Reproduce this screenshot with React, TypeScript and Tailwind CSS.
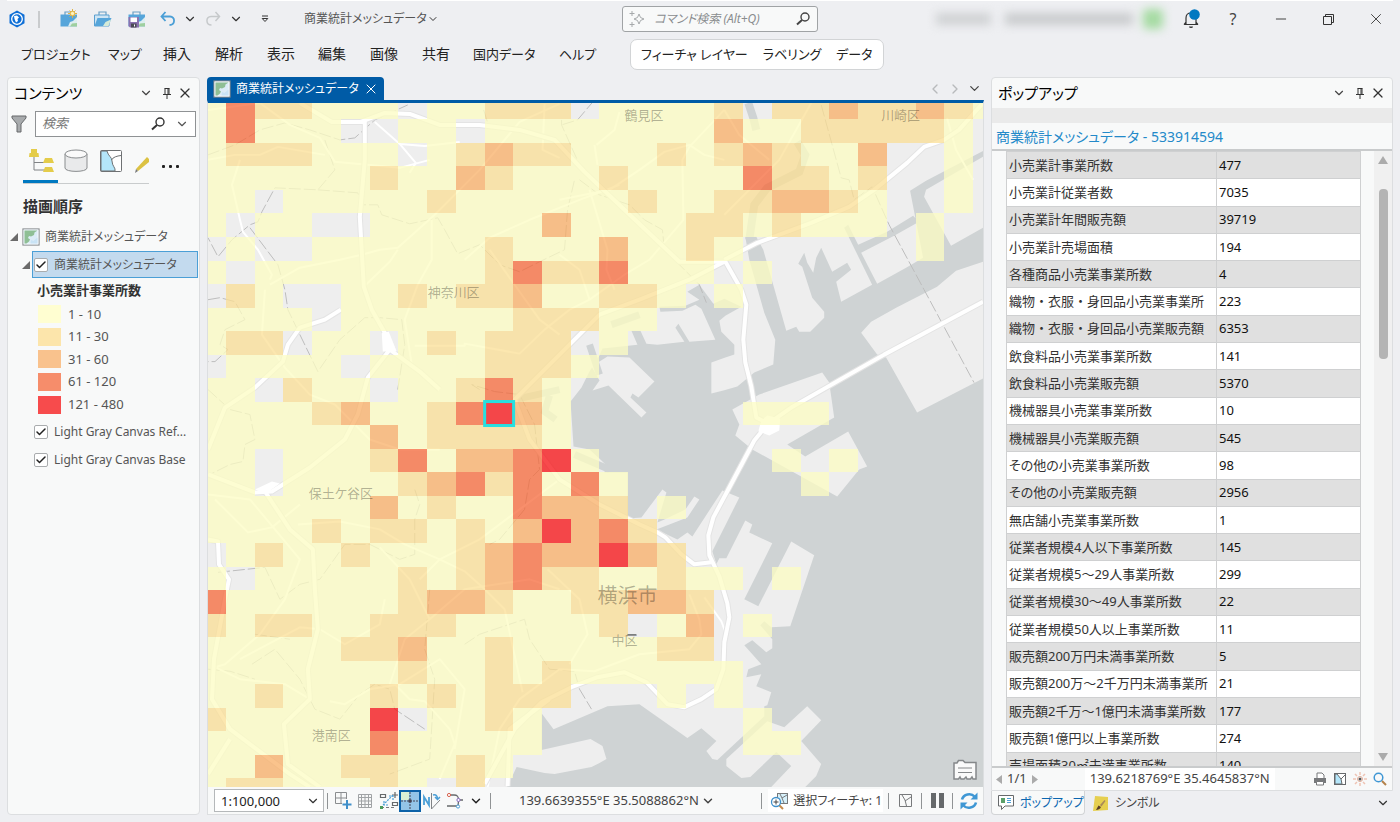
import React from 'react'
import { ChevronDown, ChevronLeft, ChevronRight, X, Check, Minus } from 'lucide-react'
import { clsx } from 'clsx'

const menuItems = [
  { label: 'プロジェクト', width: 'w-[87px] text-[13px]' },
  { label: 'マップ', width: 'w-[55px] text-[13px]' },
  { label: '挿入', width: 'w-[52px]' },
  { label: '解析', width: 'w-[52px]' },
  { label: '表示', width: 'w-[51px]' },
  { label: '編集', width: 'w-[52px]' },
  { label: '画像', width: 'w-[52px]' },
  { label: '共有', width: 'w-[51px]' },
  { label: '国内データ', width: 'w-[86px] text-[13px]' },
  { label: 'ヘルプ', width: 'w-[71px] text-[13px]' },
]

const legend = [
  { label: '1 - 10', color: 'bg-[#fffed1]' },
  { label: '11 - 30', color: 'bg-[#fce5ab]' },
  { label: '31 - 60', color: 'bg-[#f9c28d]' },
  { label: '61 - 120', color: 'bg-[#f68d6b]' },
  { label: '121 - 480', color: 'bg-[#f74b4c]' },
]

const attributes = [
  ['小売業計事業所数', '477'],
  ['小売業計従業者数', '7035'],
  ['小売業計年間販売額', '39719'],
  ['小売業計売場面積', '194'],
  ['各種商品小売業事業所数', '4'],
  ['織物・衣服・身回品小売業事業所', '223'],
  ['織物・衣服・身回品小売業販売額', '6353'],
  ['飲食料品小売業事業所数', '141'],
  ['飲食料品小売業販売額', '5370'],
  ['機械器具小売業事業所数', '10'],
  ['機械器具小売業販売額', '545'],
  ['その他の小売業事業所数', '98'],
  ['その他の小売業販売額', '2956'],
  ['無店舗小売業事業所数', '1'],
  ['従業者規模4人以下事業所数', '145'],
  ['従業者規模5〜29人事業所数', '299'],
  ['従業者規模30〜49人事業所数', '22'],
  ['従業者規模50人以上事業所数', '11'],
  ['販売額200万円未満事業所数', '5'],
  ['販売額200万〜2千万円未満事業所', '21'],
  ['販売額2千万〜1億円未満事業所数', '177'],
  ['販売額1億円以上事業所数', '274'],
  ['売場面積30㎡未満事業所数', '140'],
]

// One character per mesh cell: the class, or "." where there is no data
const mesh = [
  '1422111.11222.11112.22322321',
  '14111..11.11111111311222221.',
  '1222111.1232211121232113..1.',
  '111111211321112111142212..1.',
  '11.111112111111211223321..1.',
  '1.11..111111311112212111.1..',
  '.1..111111211131121......1..',
  '1.1111111124224111.1........',
  '.21..112122311221.1.........',
  '1111.11111122211............',
  '122.11.121222.1.............',
  '.1111.11112221..............',
  '11.211.112421...............',
  '1111231124531......111......',
  '1111113122221...............',
  '11.11124133451......1.1.....',
  '11.111123424141......1......',
  '111111312114332.1...........',
  '1111212212135342............',
  '.1211211123433532...........',
  '1.11111212342211211.1.......',
  '411111123321122332..........',
  '212211222111112.13.1........',
  '111112231121111122..........',
  '1111111211212111111.........',
  '1121112121222...1.1.........',
  '2111115.1121.......1........',
  '111111411111.......11.......',
  '11311221121.................',
  '12211121.2..................',
]

const meshFill: Record<string, string> = {
  '1': '#fdfdc3',
  '2': '#fbdf95',
  '3': '#f9af66',
  '4': '#f6693a',
  '5': '#f60e12',
}

// Mesh origin and cell size in map units
const CELL_W = 28.77
const CELL_H = 23.57
const ORIGIN_X = 197.2
const ORIGIN_Y = 95.8

const places = [
  { name: '鶴見区', x: 625, y: 120, size: 13 },
  { name: '川崎区', x: 882, y: 120, size: 13 },
  { name: '神奈川区', x: 428, y: 297, size: 13 },
  { name: '保土ケ谷区', x: 309, y: 499, size: 13 },
  { name: '港南区', x: 312, y: 741, size: 13 },
  { name: '横浜市', x: 598, y: 604, size: 20 },
  { name: '中区', x: 612, y: 646, size: 13 },
]

const highways = [
  'M984 302L885 355L792 408L769 424L755 441L730 488L714 518L709 536L710 556L720 577L728 604L730 618L725 643L724 670L717 690L702 700L685 708L668 705L647 683L625 673L598 678L572 688L542 703L515 730L485 785',
  'M725 260L742 290L747 305L744 340L746 363L752 387L757 418L769 424',
  'M725 260L758 243L812 223L850 207L875 190L908 163L925 147L945 140L960 130L984 103',
  'M300 103L332 122L365 122L365 160L360 217L364 287L372 310L385 333L390 350L420 372L440 390',
  'M390 350L368 378L358 415L345 440L310 468L272 492L255 493L208 475',
  'M265 492L290 530L313 550L315 590L318 630L308 670L310 700L284 725L288 765L320 788',
  'M208 540L218 542L219 565L229 580L225 600L214 660L212 700L230 730L290 775L310 788',
  'M208 775L230 740',
  'M341 310L325 320L300 328L288 345L283 362L255 388L225 408L208 450',
  'M361 122L385 113L410 114L440 125L480 125L520 130L555 140L585 172L625 210L680 262L725 262',
  'M508 787L510 730L550 700',
  'M725 262L690 280L640 300L600 315L575 340L540 375L515 400L530 440L560 480L600 505L640 525L658 533L666 538L682 555L695 565L712 563',
]

const streets = [
  'M208 160L235 155L260 155L278 147L325 155',
  'M208 110L260 103L290 125L320 138L335 162L400 168L430 160',
  'M240 160L232 185L240 220L243 232L258 250L272 275L270 280',
  'M375 122L400 144L425 146L460 142',
  'M400 144L416 163L410 173',
  'M270 285L300 268L340 260L362 255L380 250L398 248L435 215L480 170L520 122L560 104',
  'M364 287L390 262L398 250M432 220L432 260L418 285L405 320L412 365',
  'M415 346L465 346L465 344L520 354L545 330L570 310L590 300',
  'M265 290L262 335L285 368L310 395L335 405L370 440L400 450L440 450',
  'M560 200L610 190L640 170L665 152L690 145L705 155L725 160',
  'M545 104L543 150L560 158M595 145L598 165M597 145L615 130L620 112',
  'M590 190L608 250L607 270L615 290',
  'M725 110L690 147L683 160L684 220L650 260L625 275L590 300',
  'M465 260L490 238L530 220L580 200L620 185',
  'M490 250L515 285L540 320L560 335',
  'M560 255L580 270L590 300',
  'M725 110L740 135L770 160M812 103L780 160L725 215',
  'M948 118L957 150L974 180',
  'M215 500L248 533L272 528L300 505',
  'M208 495L250 500L300 560L285 600L260 635L225 665L215 668L240 680L285 685L310 700',
  'M330 702L345 705L370 690L400 685L440 660L465 690L455 750',
  'M298 525L340 522L380 530L405 545L440 560L465 572L485 590L505 610L523 693',
  'M380 548L410 580L430 620M385 600L380 625L345 645L320 630L300 628L240 660',
  'M420 580L440 560L480 540L520 510L560 480',
  'M390 685L405 640L430 620L465 590L530 580L560 590',
  'M395 685L410 700L425 702L450 730L455 745L440 780',
  'M488 788L500 730L520 700L560 670L595 672L640 655L690 650L702 635L700 620L690 595',
  'M548 570L580 600L588 635L570 665',
  'M705 598L722 622L728 638',
]

const boundaries = [
  'M208 155L235 145L260 130L285 123L310 130L340 140L355 138L375 120L408 105',
  'M325 140L335 170L318 190L318 190L275 188L262 212L258 222L250 225L232 240L218 257L208 238',
  'M250 228L278 265L285 290L288 310L300 335L318 372L340 340L365 318L380 318L402 320L405 345L398 390',
  'M318 190L358 193L362 205L378 205L382 215L410 224L438 218L445 230L458 254L480 245L500 265L520 272L540 262L565 250L568 210L575 180',
  'M580 180L600 195L630 205L645 220L663 230L665 250L700 285L707 303',
  'M562 120L562 125L580 165M484 110L489 126M595 100L578 120L562 125',
  'M822 105L842 178L850 180L855 200L873 187L890 225L925 290L975 383',
  'M208 300L220 298L235 302L245 320L225 330L220 345L228 350L215 362L208 362',
  'M208 390L230 410L250 415L255 440L245 445L243 462L230 465L210 475',
  'M480 390L472 385L495 392L520 395L535 425L540 470L530 480L525 510L500 540L490 545',
  'M218 573L265 568L280 600L300 585L320 580L345 545L370 545L400 560L415 555L415 520L420 505L415 490',
  'M208 670L230 672L255 680M252 665L275 650L300 680L315 710L340 720L360 695L375 685L390 690L395 710L425 730M255 635L290 640',
  'M465 645L480 635L525 620L530 640L550 670L575 672L580 690L592 710',
  'M430 590L425 650L435 680L430 760L390 775',
]

const MeshMap: React.FC = () => {
  return (
    <svg
      className="block h-full w-full"
      viewBox="208 103 776 685"
      preserveAspectRatio="xMidYMid slice"
      role="img"
      aria-label="商業統計メッシュデータ"
    >
      <rect x="0" y="0" width="1400" height="900" fill="#eeeeee" />

      {/* Tokyo bay with the wharves and canals of Yokohama and Kawasaki */}
      <path
        fill="#cfd3d4"
        d="M571 402L582 388L590 372L600 356L603 349L629 346L638 345L632 331L641 331L647 344L658 345L685 342L676 328L679 324L690 342L716 340L702 309L696 305L683 311L661 312L660 307L686 306L700 300L688 292L700 285L714 304L725 299L742 307L726 316L720 321L722 332L735 345L735 355L726 358L712 363L712 394L724 391L738 387L755 373L774 365L776 340L765 313L750 260L746 237L757 237L764 250L787 331L797 327L800 332L811 332L825 318L825 312L813 298L803 267L799 264L805 253L808 263L814 273L817 258L822 248L833 272L848 263L852 270L837 282L842 302L873 285L845 228L849 225L859 245L888 232L914 216L920 222L895 236L862 253L878 284L907 268L924 258L911 191L927 181L984 151L984 157L927 190L925 197L952 246L984 228L984 262L957 271L938 287L897 308L872 322L862 333L878 355L887 358L918 413L984 379L984 900L460 900L508 787L517 768L545 774L555 775L592 768L600 764L607 760L603 747L591 740L542 751L542 714L554 730L608 707L640 705L688 739L702 729L717 742L707 752L713 760L718 761L765 717L765 707L768 706L772 693L757 687L762 675L747 678L749 670L762 665L745 646L753 641L767 653L773 649L773 640L761 626L765 622L772 628L791 627L815 556L792 542L759 607L745 600L773 544L750 533L753 525L746 521L727 559L720 559L717 565L713 552L740 498L723 491L693 537L688 533L678 540L657 530L688 518L700 500L695 497L686 510L665 520L658 523L667 493L663 490L642 518L628 519L628 473L605 473L606 465L602 461L590 450L574 447Z"
      />
      <g fill="#eeeeee">
        <path d="M592 367L608 357L630 358L655 382L639 398L633 394L631 398L647 413L642 418L609 386L593 391L600 381Z" />
        <path d="M733 410L740 425L736 436L753 450L838 497L860 470L868 467L849 432L806 457L788 445L835 418L830 383L823 373L760 395Z" />
        <path d="M727 760L727 767L742 779L751 778L777 753L792 767L770 790L806 788L817 777L822 765L802 742L822 721L808 707L785 728L768 722Z" />
      </g>
      <path
        d="M750 240L755 205L768 188L800 172L806 155L798 142M749 103L754 118L757 130"
        fill="none"
        stroke="#cfd3d4"
        strokeWidth="8"
      />
      <path d="M550 396L545 412L556 420M612 325L640 315M515 400L560 390M590 345L600 375M575 455L610 470" fill="none" stroke="#cfd3d4" strokeWidth="7" />

      <g fill="none" strokeLinejoin="round">
        {boundaries.map((d) => (
          <path key={d} d={d} stroke="#bdbdbd" strokeWidth="1" strokeDasharray="12 3" />
        ))}
        {streets.map((d) => (
          <path key={d} d={d} stroke="#ffffff" strokeWidth="2" />
        ))}
        {highways.map((d) => (
          <path key={d} d={d} stroke="#e4e4e4" strokeWidth="6" />
        ))}
        {highways.map((d) => (
          <path key={d} d={d} stroke="#ffffff" strokeWidth="4" />
        ))}
      </g>
      <path d="M762 421L768 416L781 419L780 431L770 436L759 432Z" fill="#ffffff" />
      <path d="M382 333L389 332L397 352L383 352ZM255 490L272 482L280 484L266 494Z" fill="#ffffff" />

      <g opacity="0.75" shapeRendering="crispEdges">
        {mesh.map((row, r) =>
          row.split('').map((cell, c) =>
            cell === '.' ? null : (
              <rect
                key={`${r}-${c}`}
                x={ORIGIN_X + c * CELL_W}
                y={ORIGIN_Y + r * CELL_H}
                width={CELL_W}
                height={CELL_H}
                fill={meshFill[cell]}
              />
            )
          )
        )}
      </g>

      {/* selected cell */}
      <rect x="485" y="402" width="29" height="24" fill="none" stroke="#27dfe0" strokeWidth="3" />

      <g fill="#000000" fillOpacity="0.3" fontFamily="'Noto Sans CJK JP', sans-serif">
        {places.map((place) => (
          <text key={place.name} x={place.x} y={place.y} fontSize={place.size}>
            {place.name}
          </text>
        ))}
      </g>
      <path d="M628 635.500H637" stroke="#55585a" />
    </svg>
  )
}

interface IconProps {
  className?: string
}

const Pin: React.FC<IconProps> = ({ className }) => (
  <svg className={clsx('h-3 w-3', className)} viewBox="0 0 12 12" fill="none" stroke="currentColor">
    <path d="M3.500 1.500H8.500M4 1.500V7M8 1.500V7M7 1.500V7M2 7.500H10M6 7.500V12" />
  </svg>
)

const Magnifier: React.FC<IconProps> = ({ className }) => (
  <svg className={clsx('h-4 w-4', className)} viewBox="0 0 16 16" fill="none" stroke="currentColor">
    <circle cx="10" cy="6" r="4" strokeWidth="1.400" />
    <path d="M7 9L2 13.500" strokeWidth="2" />
  </svg>
)

const MapIcon: React.FC<IconProps> = ({ className }) => (
  <svg className={clsx('h-[18px] w-[18px] shrink-0', className)} viewBox="0 0 18 18">
    <rect x="1" y="1" width="16" height="16" fill="#dcecf7" stroke="#85898c" strokeWidth="1.200" />
    <rect x="2" y="2" width="14" height="14" fill="none" stroke="#f6fafc" />
    <path d="M2.500 2.500H15.500L12.500 4.500L12 7L9 8.500L7 8L6 10L8 11.500L7 13.500L4.500 15.500H2.500Z" fill="#8fbf95" />
    <path d="M8.500 15.500L9 12L11.500 13L15.500 9.500V15.500Z" fill="#c9e3f5" />
  </svg>
)

const FolderIcon: React.FC<{ kind: 'new' | 'open' | 'save' }> = ({ kind }) => (
  <svg className="h-[20px] w-[20px]" viewBox="0 0 20 20">
    <path d="M6 6V3H13V6" fill="none" stroke="#6a9fc4" strokeWidth="1.200" />
    {kind === 'open' ? (
      <>
        <path d="M1.500 6H16V17H1.500Z" fill="#cfe5f4" stroke="#5a9fd0" />
        <path d="M4.500 9H18.500L15.500 17H1.500Z" fill="#56a5da" />
        <path d="M10 17L12.500 13L18 10.500L15.500 17Z" fill="#d5ead8" />
      </>
    ) : (
      <>
        <path d="M1.500 5.500H18V17.500H1.500Z" fill="#56a5da" />
        <path d="M9 17.500L11 13L14 12L18 8V17.500Z" fill="#dcedf0" />
        <path d="M11 17.500L13 14.500L18 14V17.500Z" fill="#9fcf9f" />
      </>
    )}
    {kind === 'new' && (
      <g stroke="#dfb345">
        <path d="M13.500 0V9M9 4.500H18M10.500 1.500L16.500 7.500M16.500 1.500L10.500 7.500" strokeWidth="1" />
        <circle cx="13.500" cy="4.500" r="2.200" fill="#fff3bf" />
      </g>
    )}
    {kind === 'save' && (
      <g>
        <path d="M1.500 8H12V18.500H3L1.500 17Z" fill="#8a72b0" />
        <rect x="3.500" y="8.500" width="6.500" height="4.500" fill="#ffffff" />
        <rect x="4" y="14.500" width="5.500" height="4" fill="#4b4b55" />
        <rect x="7" y="15.500" width="1" height="2" fill="#ffffff" />
      </g>
    )}
  </svg>
)

const PanelHeader: React.FC<{ title: string }> = ({ title }) => (
  <header className="flex h-[30px] shrink-0 items-center pl-[6px] pr-[6px]">
    <h2 className="flex-1 text-[15px] leading-[20px] text-black">{title}</h2>
    <button aria-label="メニュー">
      <ChevronDown className="h-[14px] w-[14px] text-[#444]" />
    </button>
    <button className="ml-2" aria-label="固定">
      <Pin className="text-[#333]" />
    </button>
    <button className="ml-1" aria-label={`${title}を閉じる`}>
      <X className="h-4 w-4 text-[#333]" strokeWidth={1.8} />
    </button>
  </header>
)

const LayerCheck: React.FC<{ id: string }> = ({ id }) => (
  <span className="relative flex h-[14px] w-[14px] shrink-0">
    <input
      id={id}
      type="checkbox"
      defaultChecked
      className="h-[14px] w-[14px] appearance-none rounded-[2px] border border-[#a9acae] bg-white"
    />
    <Check className="pointer-events-none absolute left-px top-px h-3 w-3 text-[#222]" strokeWidth={3} />
  </span>
)

const Expander: React.FC = () => (
  <svg className="h-2 w-2 shrink-0" viewBox="0 0 8 8">
    <path d="M8 0V8H0Z" fill="#6b6b6b" />
  </svg>
)

const TitleBar: React.FC = () => {
  return (
    <header className="flex h-[37px] shrink-0 items-center border-t border-white">
      <div className="flex w-[615px] shrink-0 items-center">
        <svg className="ml-px h-[18px] w-[18px]" viewBox="0 0 18 18">
          <path d="M9 0.500L16.500 4.700V13.300L9 17.500L1.500 13.300V4.700Z" fill="#0f6fd6" />
          <circle cx="9" cy="9" r="5.300" fill="none" stroke="#ffffff" strokeWidth="1.300" />
          <path d="M6 6L9 5.500L11 7.500L9.500 9L10 11L8 12.500L6.500 9Z" fill="#ffffff" />
        </svg>
        <span className="ml-[12px] mr-[19px] h-[17px] w-[2px] bg-[#c9cbcd]" />
        <div className="flex items-center gap-[14px]">
          <button aria-label="新規"><FolderIcon kind="new" /></button>
          <button aria-label="開く"><FolderIcon kind="open" /></button>
          <button aria-label="保存"><FolderIcon kind="save" /></button>
        </div>
        <button className="ml-[13px]" aria-label="元に戻す">
          <svg className="h-4 w-4" viewBox="0 0 16 16" fill="none" stroke="#4b9fd6" strokeWidth="1.800">
            <path d="M5.500 1L1.500 5.500L5.500 10M2 5.500H10C15.500 5.500 15.500 14 9.500 14" />
          </svg>
        </button>
        <button className="ml-[7px]" aria-label="元に戻す履歴"><ChevronDown className="h-[14px] w-[14px] text-[#333]" /></button>
        <button className="ml-[8px]" aria-label="やり直し">
          <svg className="h-4 w-4" viewBox="0 0 16 16" fill="none" stroke="#c6c9cb" strokeWidth="1.500">
            <path d="M10.500 1L14.500 5.500L10.500 10M14 5.500H6C0.500 5.500 0.500 14 6.500 14" />
          </svg>
        </button>
        <button className="ml-[8px]" aria-label="やり直し履歴"><ChevronDown className="h-[14px] w-[14px] text-[#333]" /></button>
        <button className="ml-[18px]" aria-label="クイック アクセス">
          <svg className="h-[8px] w-[8px]" viewBox="0 0 8 8" fill="none" stroke="#333">
            <path d="M1 1H7M1.200 3.500L4 6.500L6.800 3.500Z" />
          </svg>
        </button>
        <button className="ml-[35px] flex items-center text-[12px] text-[#555]">
          商業統計メッシュデータ
          <ChevronDown className="h-[12px] w-[12px] text-[#333]" />
        </button>
      </div>
      <label className="flex h-[26px] w-[196px] shrink-0 items-center rounded-[3px] border border-[#a0a3a5] bg-[#f8f9f9] px-[6px]">
        <svg className="h-[16px] w-[16px] shrink-0" viewBox="0 0 16 16" fill="none" stroke="#a6a9ab">
          <path d="M10 3L11.500 6.500L15 8L11.500 9.500L10 13L8.500 9.500L5 8L8.500 6.500ZM3 0V5M0.500 2.500H5.500M3 11V16M0.500 13.500H5.500" />
        </svg>
        <input
          type="text"
          placeholder="コマンド検索 (Alt+Q)"
          aria-label="コマンド検索"
          className="ml-[9px] min-w-0 flex-1 bg-transparent text-[12px] italic outline-none placeholder:text-[#8a8d8f]"
        />
        <Magnifier className="text-[#444]" />
      </label>
      <div className="ml-auto flex items-center">
        <div className="flex items-center blur-[5px]" aria-hidden="true">
          <span className="h-[12px] w-[55px] bg-[#cfd1d3]" />
          <span className="ml-[14px] h-[12px] w-[128px] bg-[#c9cbcd]" />
          <span className="ml-[10px] h-[20px] w-[20px] rounded-[4px] bg-[#a5dba2]" />
        </div>
        <button className="ml-[18px]" aria-label="通知">
          <svg className="h-[20px] w-[20px]" viewBox="0 0 20 20">
            <path d="M3 15.500H17M5 15.500V9C5 6 7 4 10 4S15 6 15 9V15.500M3 15.500L5 13M17 15.500L15 13" fill="none" stroke="#333" strokeWidth="1.200" />
            <path d="M8 17.500A2 1.500 0 0 0 12 17.500Z" fill="#333" />
            <circle cx="13.500" cy="5.500" r="5.300" fill="#0079c1" />
          </svg>
        </button>
        <button className="ml-[22px] w-[20px] text-center text-[16px] leading-[20px] text-[#444]" aria-label="ヘルプを開く">?</button>
        <button className="ml-[30px]" aria-label="最小化"><Minus className="h-4 w-4 text-[#444]" strokeWidth={1.5} /></button>
        <button className="ml-[33px]" aria-label="元のサイズ">
          <svg className="h-[13px] w-[13px]" viewBox="0 0 13 13" fill="none" stroke="#333">
            <path d="M1.500 3.500H9.500V11.500H1.500ZM3.500 3.500V1.500H11.500V9.500H9.500" />
          </svg>
        </button>
        <button className="ml-[32px] mr-[8px]" aria-label="終了"><X className="h-[18px] w-[18px] text-[#444]" strokeWidth={1.3} /></button>
      </div>
    </header>
  )
}

const MenuBar: React.FC = () => {
  return (
    <nav className="flex h-[34px] shrink-0 items-center pl-[14px] text-[14px] leading-[20px] text-[#222]">
      {menuItems.map((item) => (
        <button key={item.label} className={clsx('shrink-0 whitespace-nowrap text-left', item.width)}>
          {item.label}
        </button>
      ))}
      <div className="flex h-[31px] shrink-0 items-center gap-[15px] rounded-[7px] border border-[#d2d4d6] bg-white px-[10px] text-[13px]">
        <button className="whitespace-nowrap">フィーチャ レイヤー</button>
        <button className="whitespace-nowrap">ラベリング</button>
        <button className="whitespace-nowrap">データ</button>
      </div>
    </nav>
  )
}

const ContentsPanel: React.FC = () => {
  return (
    <aside className="flex w-[193px] shrink-0 flex-col rounded-[4px] border border-[#dcdee0] bg-[#f8f9f9]">
      <PanelHeader title="コンテンツ" />
      <div className="flex items-center gap-[8px] pl-[3px] pr-[3px] pt-[3px]">
        <svg className="h-[18px] w-[16px] shrink-0" viewBox="0 0 16 18">
          <path d="M1 1H15V3L10 9V17H6V9L1 3Z" fill="#a8abad" stroke="#66696b" />
        </svg>
        <label className="flex h-[26px] min-w-0 flex-1 items-center border border-[#8f9294] bg-white px-[6px]">
          <input
            type="text"
            placeholder="検索"
            aria-label="レイヤーの検索"
            className="min-w-0 flex-1 bg-transparent text-[13px] italic outline-none placeholder:text-[#777]"
          />
          <Magnifier className="text-[#333]" />
          <ChevronDown className="ml-[9px] h-[14px] w-[14px] text-[#555]" />
        </label>
      </div>

      <div className="flex h-[43px] items-end pb-[6px] pl-[21px]">
        <button aria-label="描画順序で表示">
          <svg className="h-[26px] w-[26px]" viewBox="0 0 26 26">
            <path d="M5 8V22H16M5 14.500H16" fill="none" stroke="#808386" />
            <path d="M2 1H8V5H9.500L10 9H0L0.500 5H2ZM16 10H23L25 15H14ZM16 19H23L25 24H14Z" fill="#e4cc4a" />
          </svg>
        </button>
        <button className="ml-[9px]" aria-label="データ ソースで表示">
          <svg className="h-[26px] w-[24px]" viewBox="0 0 24 26" stroke="#8a8d8f">
            <path d="M1 6V20C1 24.500 23 24.500 23 20V6" fill="#e9eaeb" />
            <ellipse cx="12" cy="6" rx="11" ry="4" fill="#fafafa" />
          </svg>
        </button>
        <button className="ml-[11px]" aria-label="選択で表示">
          <svg className="h-[26px] w-[24px]" viewBox="0 0 24 26" stroke="#6e7173">
            <rect x="1.500" y="2.500" width="21" height="21" rx="1" fill="#ffffff" />
            <path d="M2 3H8C9 8 13 9 13 13C13 18 17 20 16 23H2Z" fill="#b4e6fa" />
            <path d="M12.500 12C14 9 18 8 22 7.500" fill="none" />
          </svg>
        </button>
        <button className="ml-[11px]" aria-label="編集で表示">
          <svg className="h-[20px] w-[16px]" viewBox="0 0 16 20">
            <path d="M13 3L15 5V8L4 17L2 15Z" fill="#dcc243" />
            <path d="M2 15L4 17L1 19Z" fill="#77797b" />
          </svg>
        </button>
        <button className="mb-[4px] ml-[11px]" aria-label="その他">
          <svg className="h-[8px] w-[20px]" viewBox="0 0 20 8" fill="#222">
            <rect x="1" y="3" width="3" height="3" rx="1" />
            <rect x="8" y="3" width="3" height="3" rx="1" />
            <rect x="15" y="3" width="3" height="3" rx="1" />
          </svg>
        </button>
      </div>
      <div className="ml-[15px] h-[4px] w-[126px] border-b border-[#c9cccd]">
        <div className="h-[3px] w-[35px] bg-[#0079c1]" />
      </div>

      <h3 className="mt-[11px] pl-[15px] text-[15px] font-bold leading-[22px] text-[#333]">描画順序</h3>

      <div className="mt-[9px] flex h-[22px] items-center pl-[2px] text-[12px] text-[#555]">
        <Expander />
        <MapIcon className="ml-[4px]" />
        <span className="ml-[5px]">商業統計メッシュデータ</span>
      </div>
      <div className="mt-[3px] flex h-[27px] items-center gap-[2px] pl-[14px] pr-px">
        <Expander />
        <div className="flex h-full flex-1 items-center gap-[6px] border border-[#4b9fd6] bg-[#c3daee] pl-px text-[12px] text-[#555]">
          <LayerCheck id="layer-mesh" />
          <label htmlFor="layer-mesh">商業統計メッシュデータ</label>
        </div>
      </div>

      <h4 className="mt-[2px] pl-[29px] text-[13px] font-bold leading-[20px] text-[#333]">小売業計事業所数</h4>
      <ul className="mt-[3px] grid h-[113px] grid-rows-5 pl-[30px] text-[13px] text-[#555]">
        {legend.map((item) => (
          <li key={item.label} className="flex items-center gap-[7px]">
            <span className={clsx('h-[18px] w-[23px]', item.color)} />
            {item.label}
          </li>
        ))}
      </ul>

      <div className="mt-[2px] flex flex-col text-[12px] text-[#555]">
        <div className="flex h-[28px] items-center gap-[6px] pl-[26px]">
          <LayerCheck id="layer-reference" />
          <label htmlFor="layer-reference">Light Gray Canvas Ref...</label>
        </div>
        <div className="flex h-[28px] items-center gap-[6px] pl-[26px]">
          <LayerCheck id="layer-base" />
          <label htmlFor="layer-base">Light Gray Canvas Base</label>
        </div>
      </div>
    </aside>
  )
}

const Divider: React.FC<IconProps> = ({ className }) => (
  <span className={clsx('h-[16px] w-px shrink-0 bg-[#909395]', className)} />
)

const MapStatusBar: React.FC = () => {
  return (
    <footer className="flex h-[27px] shrink-0 items-center pl-[6px] pr-[4px] text-[13px] text-[#444]">
      <div className="relative shrink-0">
        <select
          aria-label="縮尺"
          className="h-[23px] w-[110px] appearance-none border border-[#b5b8ba] bg-white pl-[6px] text-[13px] leading-[20px] text-[#222]"
        >
          <option>1:100,000</option>
        </select>
        <ChevronDown className="pointer-events-none absolute right-[4px] top-[5px] h-[14px] w-[14px] text-[#333]" />
      </div>
      <Divider className="ml-[3px] mr-[6px]" />
      <button aria-label="ブックマークの追加">
        <svg className="h-[19px] w-[18px]" viewBox="0 0 18 19" fill="none">
          <path d="M1.500 1.500H12.500V8M1.500 1.500V12.500H8M7 1.500V12.500M1.500 7H12.500" stroke="#8a8d8f" />
          <path d="M13 9V18M8.500 13.500H17.500" stroke="#3f8fca" strokeWidth="2" />
        </svg>
      </button>
      <button className="ml-[5px]" aria-label="グリッド">
        <svg className="h-[16px] w-[16px]" viewBox="0 0 16 16" fill="none" stroke="#a0a3a5">
          <path d="M1.500 1.500H14.500V14.500H1.500ZM4.500 1V15M8 1V15M11.500 1V15M1 4.500H15M1 8H15M1 11.500H15" />
        </svg>
      </button>
      <button className="ml-[6px]" aria-label="ダイナミック コンストレイント">
        <svg className="h-[18px] w-[20px]" viewBox="0 0 20 18" fill="none">
          <path d="M1.500 2.500H6.500V5.500H1.500ZM13.500 10.500H18.500V13.500H13.500ZM16 0V6M13 3H19" stroke="#66696b" strokeWidth="1.200" />
          <path d="M4 13L14 3M5 9V13H9M10 4H14V8" stroke="#4b9fd6" strokeWidth="1.200" strokeDasharray="2 1" />
          <path d="M2 15.500H17" stroke="#77797b" strokeWidth="1.200" strokeDasharray="3 2" />
          <rect x="1" y="14" width="3" height="3" fill="#4a9a5a" />
        </svg>
      </button>
      <button className="border-2 border-[#0d62a8] bg-[#94c5e8]" aria-label="スナップ">
        <svg className="h-[18px] w-[18px]" viewBox="0 0 18 18">
          <rect x="0" y="0" width="8" height="8" fill="#ddf0d4" />
          <path d="M9 0V18M0 9H18" stroke="#445" strokeDasharray="2 1" />
          <rect x="7.500" y="7.500" width="3" height="3" fill="#445" />
        </svg>
      </button>
      <button className="ml-[2px]" aria-label="北方向の補正">
        <svg className="h-[18px] w-[18px]" viewBox="0 0 18 18" fill="none">
          <path d="M1 13V5L6 13V5" stroke="#4b9fd6" strokeWidth="1.800" />
          <path d="M8.500 1V17L17 8" stroke="#808386" />
          <path d="M10 3C13 2 14.500 4 14.500 7M12 5L14.500 7.500L17 5" stroke="#4b9fd6" strokeWidth="1.500" />
        </svg>
      </button>
      <button className="ml-[5px]" aria-label="ジオメトリの編集">
        <svg className="h-[18px] w-[18px]" viewBox="0 0 18 18" fill="none">
          <path d="M3 3H8C12 3 12.500 5 12.500 8C12.500 11 12 13 12 14H1M12.500 8H17" stroke="#66696b" strokeWidth="1.300" />
          <circle cx="3" cy="3" r="1.600" fill="#ffffff" stroke="#d8634f" />
          <circle cx="12.500" cy="8" r="1.600" fill="#ffffff" stroke="#8a6bc0" />
          <circle cx="12" cy="14.500" r="1.600" fill="#ffffff" stroke="#4b9fd6" />
        </svg>
      </button>
      <button className="ml-[5px]" aria-label="その他の編集">
        <ChevronDown className="h-[14px] w-[14px] text-[#222]" strokeWidth={2.5} />
      </button>
      <Divider className="ml-[7px]" />
      <button className="ml-[28px] flex items-center gap-[2px] whitespace-nowrap">
        139.6639355°E 35.5088862°N
        <ChevronDown className="h-[14px] w-[14px] text-[#444]" strokeWidth={2.5} />
      </button>
      <div className="ml-auto flex h-full items-center">
        <Divider />
        <button className="ml-[6px] flex h-[23px] items-center gap-[4px] whitespace-nowrap bg-white px-px text-[12px]">
          <svg className="h-[20px] w-[20px]" viewBox="0 0 20 20" fill="none">
            <rect x="8.500" y="2.500" width="10" height="10" fill="#d6f0fa" stroke="#77797b" />
            <path d="M11 3L13 7L18 4M13 7L15 12" stroke="#77797b" />
            <path d="M10 14L14 18" stroke="#c58a4a" strokeWidth="2" />
            <circle cx="7" cy="11" r="4.500" fill="#ffffff" stroke="#3f8fca" strokeWidth="1.300" />
            <path d="M7 8.500V13.500M4.500 11H9.500" stroke="#444" />
          </svg>
          選択フィーチャ: 1
        </button>
        <Divider className="ml-[5px]" />
        <button className="ml-[9px]" aria-label="選択レイヤー">
          <svg className="h-[15px] w-[15px]" viewBox="0 0 15 15" fill="none" stroke="#77797b">
            <path d="M1.500 1.500H13.500V13.500H1.500ZM4 2L7 7L8.500 13M7 8L13 4" />
          </svg>
        </button>
        <Divider className="ml-[8px]" />
        <button className="ml-[9px] flex gap-[3px]" aria-label="描画の一時停止">
          <span className="h-[15px] w-[5px] bg-[#66696b]" />
          <span className="h-[15px] w-[5px] bg-[#66696b]" />
        </button>
        <Divider className="ml-[8px]" />
        <button className="ml-[6px]" aria-label="再描画">
          <svg className="h-[20px] w-[20px]" viewBox="0 0 20 20">
            <path d="M3 8.500C4.500 3 12 1.500 15.500 5.500M17 11.500C15.500 17 8 18.500 4.500 14.500" fill="none" stroke="#3f97d4" strokeWidth="2.600" />
            <path d="M18.500 1.500V8.500H11.500ZM1.500 18.500V11.500H8.500Z" fill="#3f97d4" />
          </svg>
        </button>
      </div>
    </footer>
  )
}

const MapPane: React.FC = () => {
  return (
    <main className="flex min-w-0 flex-1 flex-col">
      <div className="flex h-[23px] shrink-0 items-center">
        <div className="flex h-full w-[177px] shrink-0 items-center rounded-t-[4px] bg-[#005ba6] pl-[6px] pr-[5px] pt-px">
          <MapIcon />
          <span className="ml-[5px] flex-1 whitespace-nowrap text-[12px] text-white">商業統計メッシュデータ</span>
          <button aria-label="マップを閉じる">
            <X className="h-4 w-4 text-white" strokeWidth={1.5} />
          </button>
        </div>
        <div className="ml-auto flex items-center gap-[4px] pr-[2px] text-[#b7babc]">
          <button aria-label="前のタブ"><ChevronLeft className="h-4 w-4" /></button>
          <button aria-label="次のタブ"><ChevronRight className="h-4 w-4" /></button>
          <button aria-label="タブ一覧"><ChevronDown className="h-[15px] w-[15px] text-[#444]" /></button>
        </div>
      </div>
      <div className="flex min-h-0 flex-1 flex-col border border-t-[3px] border-[#dcdee0] border-t-[#005ba6] bg-[#f8f9f9]">
        <div className="relative min-h-0 flex-1 overflow-hidden">
          <MeshMap />
          <button className="absolute bottom-[6px] right-[5px]" aria-label="マップ操作の表示">
            <svg className="h-[22px] w-[26px]" viewBox="0 0 26 22">
              <path d="M2 4H5L6.500 1.500H11L13 3.500H24V20H21L20 18L18.500 20H15L14 18L12 20H9L8 18L6.500 20H2Z" fill="#fafafa" stroke="#85888a" strokeWidth="1.500" />
              <path d="M6 9H20M6 13.500H20" stroke="#85888a" strokeWidth="1.200" />
            </svg>
          </button>
        </div>
        <MapStatusBar />
      </div>
    </main>
  )
}

const PopupPanel: React.FC = () => {
  return (
    <aside className="flex w-[402px] shrink-0 flex-col">
      <div className="flex min-h-0 flex-1 flex-col rounded-t-[4px] border border-[#dcdee0] bg-[#f8f9f9]">
        <PanelHeader title="ポップアップ" />
        <div className="h-[15px] shrink-0 bg-[#eaeaea]" />
        <div className="h-[28px] shrink-0 border-b-2 border-[#c9cbcc] pl-[4px] text-[14px] leading-[28px] text-[#2389c9]">
          商業統計メッシュデータ - 533914594
        </div>
        <div className="flex min-h-0 flex-1">
          <div className="min-w-0 flex-1 overflow-hidden pl-[14px] pr-[13px]">
            <table className="h-[629px] w-full table-fixed border-collapse text-[13px] leading-[18px] text-[#333]">
              <tbody>
                {attributes.map(([name, value], i) => (
                  <tr key={name} className={i % 2 === 0 ? 'bg-[#e0e0e0]' : 'bg-white'}>
                    <th
                      scope="row"
                      className={clsx(
                        'w-[210px] whitespace-nowrap border border-[#cfd0d1] pb-px pl-[2px] text-left font-normal',
                        // the middle dot keeps its full width
                        name.includes('・') && '[font-feature-settings:normal]'
                      )}
                    >
                      {name}
                    </th>
                    <td className="border border-[#cfd0d1] pb-px pl-[2px] text-[#111]">{value}</td>
                  </tr>
                ))}
              </tbody>
            </table>
          </div>
          <div className="flex w-[18px] shrink-0 flex-col items-center bg-[#f0f0f0] py-[5px]">
            <svg className="h-[8px] w-[10px]" viewBox="0 0 10 8"><path d="M5 0L10 8H0Z" fill="#ababab" /></svg>
            <div className="mt-[25px] h-[170px] w-[9px] rounded-[4px] bg-[#b4b4b4]" />
            <svg className="mt-auto h-[8px] w-[10px]" viewBox="0 0 10 8"><path d="M0 0H10L5 8Z" fill="#ababab" /></svg>
          </div>
        </div>
        <div className="flex h-[24px] shrink-0 items-center border-t-2 border-[#c9cbcc] pl-[4px] pr-[5px] text-[13px] text-[#444]">
          <button aria-label="前へ">
            <svg className="h-[9px] w-[6px]" viewBox="0 0 6 9"><path d="M6 0V9L0 4.500Z" fill="#ababab" /></svg>
          </button>
          <span className="mx-[5px]">1/1</span>
          <button aria-label="次へ">
            <svg className="h-[9px] w-[6px]" viewBox="0 0 6 9"><path d="M0 0V9L6 4.500Z" fill="#ababab" /></svg>
          </button>
          <span className="ml-[47px] flex h-full items-center bg-white px-[5px]">139.6218769°E 35.4645837°N</span>
          <div className="ml-auto flex items-center gap-[6px]">
            <button aria-label="印刷">
              <svg className="h-[14px] w-[14px]" viewBox="0 0 14 14">
                <path d="M4 6V1H9L11 3V6" fill="#ffffff" stroke="#77797b" />
                <path d="M1 6H13V11H1Z" fill="#77797b" />
                <path d="M3.500 9.500H10.500V13H3.500Z" fill="#ffffff" stroke="#77797b" />
              </svg>
            </button>
            <button aria-label="選択">
              <svg className="h-[14px] w-[14px]" viewBox="0 0 14 14" stroke="#66696b">
                <rect x="1.500" y="1.500" width="11" height="11" fill="#ffffff" />
                <path d="M2 2H4L8 7L9 12H2Z" fill="#b4e6fa" />
                <path d="M8 7L12 3" />
              </svg>
            </button>
            <button aria-label="点滅">
              <svg className="h-[14px] w-[14px]" viewBox="0 0 14 14" fill="none">
                <path d="M7 0V3M7 11V14M0 7H3M11 7H14M2 2L4 4M10 10L12 12M12 2L10 4M4 10L2 12" stroke="#efc3b3" strokeWidth="1.500" />
                <circle cx="7" cy="7" r="2.500" fill="#ffffff" stroke="#e0a994" />
                <circle cx="7" cy="7" r="1.500" fill="#555" />
              </svg>
            </button>
            <button aria-label="ズーム">
              <svg className="h-[14px] w-[14px]" viewBox="0 0 14 14" fill="none">
                <circle cx="5.500" cy="5.500" r="4.300" stroke="#3f97d4" strokeWidth="1.500" />
                <path d="M9 9L13 13" stroke="#b3824a" strokeWidth="2" />
              </svg>
            </button>
          </div>
        </div>
      </div>
      <div className="flex h-[24px] shrink-0 items-center text-[12px]">
        <button className="flex h-full w-[94px] items-center gap-[5px] whitespace-nowrap rounded-b-[4px] border border-t-0 border-[#d2d4d6] bg-[#f8f9f9] pl-[5px] text-[#0a66b0]">
          <svg className="h-[17px] w-[18px] shrink-0" viewBox="0 0 18 17">
            <path d="M1.500 1.500H16.500V12H8L4.500 15.500V12H1.500Z" fill="#ffffff" stroke="#66696b" />
            <rect x="4" y="4" width="4" height="5" fill="#5a9f68" />
            <path d="M10 4.500H14M10 6.500H14M10 8.500H14" stroke="#4b9fd6" />
          </svg>
          ポップアップ
        </button>
        <button className="ml-[7px] flex items-center gap-[6px] text-[#444]">
          <svg className="h-[17px] w-[17px]" viewBox="0 0 17 17">
            <path d="M3 1L16 2V15L1 16Z" fill="#e6cf50" />
            <path d="M8 10L12.500 5L13.500 6L9.500 11.500Z" fill="#a98a5a" />
            <path d="M4 15L6.500 10.500L9 12C8 14.500 6 14.500 4 15Z" fill="#5b4028" />
          </svg>
          シンボル
        </button>
        <button className="ml-auto mr-[3px]" aria-label="パネル一覧">
          <ChevronDown className="h-[14px] w-[14px] text-[#333]" />
        </button>
      </div>
    </aside>
  )
}

export default function App() {
  return (
    <div className="flex h-screen flex-col overflow-hidden bg-[#eeeff2] px-[7px] font-['Noto_Sans','Noto_Sans_CJK_JP',sans-serif] [font-feature-settings:'palt']">
      <TitleBar />
      <MenuBar />
      <div className="flex min-h-0 flex-1 gap-[7px] pb-[7px] pt-[6px]">
        <ContentsPanel />
        <MapPane />
        <PopupPanel />
      </div>
    </div>
  )
}
